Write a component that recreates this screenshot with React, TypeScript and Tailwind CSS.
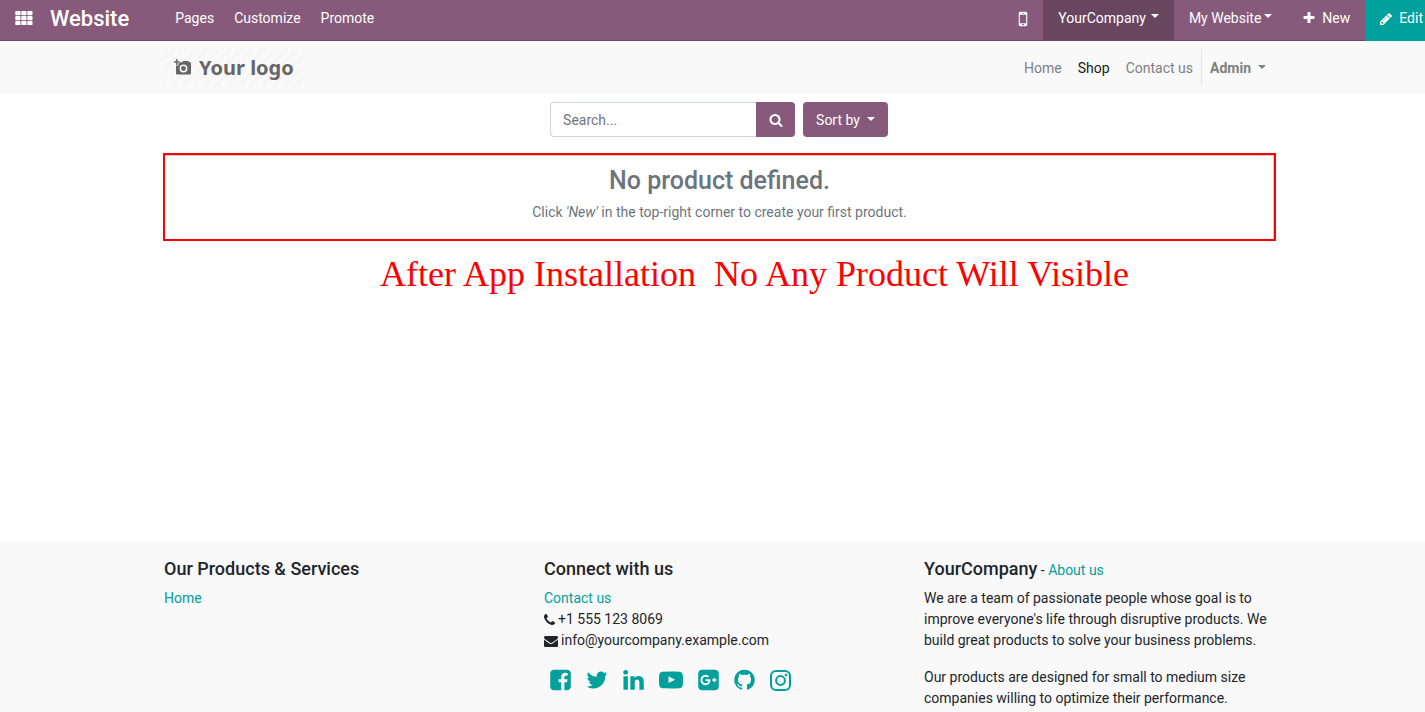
import type { ReactNode } from "react";

const icons = {
  mobile: "M976 1408q0-33-23.5-56.5t-56.5-23.5-56.5 23.5-23.5 56.5 23.5 56.5 56.5 23.5 56.5-23.5 23.5-56.5zm208-160v-704q0-13-9.5-22.5t-22.5-9.5h-512q-13 0-22.5 9.5t-9.5 22.5v704q0 13 9.5 22.5t22.5 9.5h512q13 0 22.5-9.5t9.5-22.5zm-192-848q0-16-16-16h-160q-16 0-16 16t16 16h160q16 0 16-16zm288-16v1024q0 52-38 90t-90 38h-512q-52 0-90-38t-38-90v-1024q0-52 38-90t90-38h512q52 0 90 38t38 90z",
  plus: "M1600 736v192q0 40-28 68t-68 28h-416v416q0 40-28 68t-68 28h-192q-40 0-68-28t-28-68v-416h-416q-40 0-68-28t-28-68v-192q0-40 28-68t68-28h416v-416q0-40 28-68t68-28h192q40 0 68 28t28 68v416h416q40 0 68 28t28 68z",
  pencil: "M491 1536l91-91-235-235-91 91v107h128v128h107zm523-928q0-22-22-22-10 0-17 7l-542 542q-7 7-7 17 0 22 22 22 10 0 17-7l542-542q7-7 7-17zm-54-192l416 416-832 832h-416v-416zm683 96q0 53-37 90l-166 166-416-416 166-165q36-38 90-38 53 0 91 38l235 234q37 39 37 91z",
  search: "M1216 832q0-185-131.5-316.5t-316.5-131.5-316.5 131.5-131.5 316.5 131.5 316.5 316.5 131.5 316.5-131.5 131.5-316.5zm512 832q0 52-38 90t-90 38q-54 0-90-38l-343-342q-179 124-399 124-143 0-273.5-55.5t-225-150-150-225-55.5-273.5 55.5-273.5 150-225 225-150 273.5-55.5 273.5 55.5 225 150 150 225 55.5 273.5q0 220-124 399l343 343q37 37 37 90z",
  phone: "M1600 1240q0 27-10 70.5t-21 68.5q-21 50-122 106-94 51-186 51-27 0-53-3.5t-57.5-12.5-47-14.5-55.5-20.5-49-18q-98-35-175-83-127-79-264-216t-216-264q-48-77-83-175-3-9-18-49t-20.5-55.5-14.5-47-12.5-57.5-3.5-53q0-92 51-186 56-101 106-122 25-11 68.5-21t70.5-10q14 0 21 3 18 6 53 76 11 19 30 54t35 63.5 31 53.5q3 4 17.5 25t21.5 35.5 7 28.5q0 20-28.500 50t-62 55-62 53-28.500 46q0 9 5 22.500t8.500 20.500 14 24 11.500 19q76 137 174 235t235 174q2 1 19 11.500t24 14 20.500 8.500 22.500 5q18 0 46-28.500t53-62 55-62 50-28.500q14 0 28.500 7t35.500 21.500 25 17.500q25 15 53.500 31t63.500 35 54 30q70 35 76 53 3 7 3 21z",
  envelope: "M1792 710v794q0 66-47 113t-113 47h-1472q-66 0-113-47t-47-113v-794q44 49 101 87 362 246 497 345 57 42 92.5 65.5t94.5 48 110 24.5h2q51 0 110-24.5t94.5-48 92.5-65.5q170-123 498-345 57-39 100-87zm0-294q0 79-49 151t-122 123q-376 261-468 325-10 7-42.5 31t-54 38.5-52 32.5-57.5 27-50 9h-2q-23 0-50-9t-57.5-27-52-32.5-54-38.5-42.5-31q-91-64-262-182.5t-205-142.5q-62-42-117-115.5t-55-136.5q0-78 41.5-130t118.5-52h1472q65 0 112.5 47t47.5 113z",
  facebook: "M1376 128q119 0 203.5 84.5t84.5 203.5v960q0 119-84.5 203.5t-203.5 84.5h-188v-595h199l30-232h-229v-148q0-56 23.5-84t91.5-28l122-1v-207q-63-9-178-9-136 0-217.5 80t-81.5 226v171h-200v232h200v595h-532q-119 0-203.5-84.5t-84.5-203.5v-960q0-119 84.5-203.5t203.5-84.5h960z",
  twitter: "M1684 408q-67 98-162 167 1 14 1 42 0 130-38 259.5t-115.5 248.5-184.5 210.5-258 146-323 54.5q-271 0-496-145 35 4 78 4 225 0 401-138-105-2-188-64.5t-114-159.5q33 5 61 5 43 0 85-11-112-23-185.5-111.5t-73.5-205.5v-4q68 38 146 41-66-44-105-115t-39-154q0-88 44-163 121 149 294.5 238.5t371.5 99.5q-8-38-8-74 0-134 94.5-228.5t228.5-94.5q140 0 236 102 109-21 205-78-37 115-142 178 93-10 186-50z",
  linkedin: "M477 625v991h-330v-991h330zm21-306q1 73-50.5 122t-135.5 49h-2q-82 0-132-49t-50-122q0-74 51.5-122.5t134.5-48.5 133 48.5 51 122.5zm1166 729v568h-329v-530q0-105-40.5-164.5t-126.5-59.5q-63 0-105.5 34.5t-63.5 85.5q-11 30-11 81v553h-329q2-399 2-647t-1-296l-1-48h329v144h-2q20-32 41-56t56.5-52 87-43.5 114.5-15.5q171 0 275 113.5t104 332.5z",
  youtube: "M711 1128l484-250-484-253v503zm185-862q168 0 324.5 4.5t229.5 9.5l73 4q1 0 17 1.5t23 3 23.5 4.5 28.5 8 28 13 31 19.5 29 26.5q6 6 15.5 18.5t29 58.5 26.5 101q8 64 12.5 136.5t5.5 113.5v176q1 145-18 290-7 55-25 99.5t-32 61.5l-14 17q-14 15-29 26.5t-31 19-28 12.5-28.5 8-24 4.5-23 3-16.5 1.5q-251 19-627 19-207-2-359.5-6.5t-200.5-7.5l-49-4-36-4q-36-5-54.5-10t-51-21-56.5-41q-6-6-15.5-18.5t-29-58.5-26.5-101q-8-64-12.5-136.5t-5.5-113.5v-176q-1-145 18-290 7-55 25-99.5t32-61.5l14-17q14-15 29-26.5t31-19.5 28-13 28.5-8 23.5-4.5 23-3 17-1.5q251-18 627-18z",
  googlePlus: "M1045 905q0-26-6-64h-362v132h217q-3 24-16.5 50t-37.5 53-66.5 44.5-96.5 17.5q-99 0-169-71t-70-171 70-171 169-71q92 0 153 59l104-101q-108-100-257-100-160 0-272 112.5t-112 271.5 112 271.5 272 112.5q165 0 266.5-105t101.5-270zm345 46h109v-110h-109v-110h-110v110h-110v110h110v110h110v-110zm274-535v960q0 119-84.5 203.5t-203.5 84.5h-960q-119 0-203.5-84.5t-84.5-203.5v-960q0-119 84.5-203.5t203.5-84.5h960q119 0 203.5 84.5t84.5 203.5z",
  github: "M896 128q209 0 385.5 103t279.5 279.5 103 385.5q0 251-146.5 451.5t-378.5 277.5q-27 5-40-7t-13-30q0-3 .5-76.5t.5-134.5q0-97-52-142 57-6 102.5-18t94-39 81-66.5 53-105 20.5-150.5q0-119-79-206 37-91-8-204-28-9-81 11t-92 44l-38 24q-93-26-192-26t-192 26q-16-11-42.5-27t-83.5-38.5-85-13.5q-45 113-8 204-79 87-79 206 0 85 20.5 150t52.5 105 80.5 67 94 39 102.5 18q-39 36-49 103-21 10-45 15t-57 5-65.5-21.5-55.5-62.5q-19-32-48.5-52t-49.5-24l-20-3q-21 0-29 4.5t-5 11.5 9 14 13 12l7 5q22 10 43.5 38t31.5 51l10 23q13 38 44 61.5t67 30 69.5 7 55.5-3.5l23-4q0 38 .5 88.5t.5 54.5q0 18-13 30t-40 7q-232-77-378.5-277.5t-146.5-451.5q0-209 103-385.5t279.5-279.5 385.5-103z",
};

type IconProps = { name: keyof typeof icons; className: string; viewBox?: string };

function Icon({ name, className, viewBox = "0 0 1792 1792" }: IconProps) {
  return (
    <svg viewBox={viewBox} className={className} fill="currentColor" aria-hidden="true">
      <path d={icons[name]} />
    </svg>
  );
}

function GridIcon() {
  return (
    <svg viewBox="0 0 18 14" className="h-[14px] w-[18px]" fill="currentColor" aria-hidden="true">
      {[0, 5, 10].map((y) =>
        [0, 6, 12].map((x) => <rect key={`${x}-${y}`} x={x + 0.3} y={y} width="5.2" height="4.2" rx="0.8" />),
      )}
    </svg>
  );
}

function InstagramIcon() {
  return (
    <svg viewBox="0 0 21 21" className="h-[21px] w-[21px]" fill="none" stroke="currentColor" strokeWidth="2" aria-hidden="true">
      <rect x="1" y="1" width="19" height="19" rx="5" />
      <circle cx="10.5" cy="10.5" r="4.4" />
      <circle cx="16" cy="5" r="1.3" fill="currentColor" stroke="none" />
    </svg>
  );
}

function Caret() {
  return (
    <svg viewBox="0 0 8 4" className="mb-1 h-1 w-2" fill="currentColor" aria-hidden="true">
      <path d="M0 0h8L4 4z" />
    </svg>
  );
}

function Container({ children, className = "" }: { children: ReactNode; className?: string }) {
  return <div className={`mx-auto w-full max-w-[1140px] px-[15px] ${className}`}>{children}</div>;
}

function AdminBar() {
  return (
    <header className="flex h-[41px] items-stretch justify-between bg-[#875a7b] text-white">
      <nav className="flex items-center border-b border-[#68465f] pb-1">
        <button type="button" aria-label="Applications" className="pl-[15px]">
          <GridIcon />
        </button>
        <a href="#website" className="ml-[17px] pt-[2px] text-[22px] leading-6 font-medium">Website</a>
        <div className="ml-[46px] flex gap-5">
          <a href="#pages">Pages</a>
          <a href="#customize">Customize</a>
          <a href="#promote">Promote</a>
        </div>
      </nav>
      <div className="flex flex-1 items-stretch justify-end">
        <div className="flex-1 border-b border-[#68465f]" />
        <button type="button" aria-label="Mobile preview" className="border-b border-[#68465f] px-[10px] pb-[2px]">
          <Icon name="mobile" className="h-5 w-5" />
        </button>
        <button type="button" className="flex items-center gap-[5px] border-b border-[#68465f] bg-[#68465f] px-[15px] pb-1">
          YourCompany <Caret />
        </button>
        <button type="button" className="flex items-center gap-[3px] border-b border-[#68465f] px-[15px] pb-1">
          My Website <Caret />
        </button>
        <button type="button" className="flex items-center gap-[6px] border-b border-[#68465f] px-[15px] pb-1">
          <Icon name="plus" className="h-[14px] w-[14px]" /> New
        </button>
        <button type="button" className="flex items-center gap-[6px] bg-[#00a09d] pr-[15px] pb-1 pl-[14px]">
          <Icon name="pencil" className="h-[14px] w-[14px]" /> Edit
        </button>
      </div>
    </header>
  );
}

function Logo() {
  return (
    <a
      href="#home"
      className="flex h-[37px] w-[139px] items-center gap-[7px] bg-[repeating-linear-gradient(135deg,#f9f9f9_0px,#f9f9f9_6px,#f4f4f4_6px,#f4f4f4_8px)] pl-[10px] text-[#666666]"
    >
      <svg viewBox="0 0 18 17" className="h-[17px] w-[18px]" aria-hidden="true">
        <path fill="currentColor" d="M7 3.2h1l1.200-1.200h5l1.200 1.200h.6q1 0 1 1V14.500q0 1-1 1H3q-1 0-1-1V6.500h2.500V4z" />
        <path stroke="currentColor" strokeWidth="1.400" d="M0 3h5.500M2.800 0v6" />
        <circle cx="9.500" cy="9.500" r="3.200" fill="none" stroke="#f9f9f9" strokeWidth="1.500" />
      </svg>
      <span className="font-['Noto_Sans',sans-serif] text-[20px] leading-6 font-bold">Your logo</span>
    </a>
  );
}

function SiteNav() {
  return (
    <div className="bg-[#f9f9f9]">
      <Container className="flex h-[53px] items-center justify-between">
        <Logo />
        <nav className="flex items-center text-[#7f7f7f]">
          <a href="#home" className="px-2 pt-[2px]">Home</a>
          <a href="#shop" className="px-2 pt-[2px] text-[#191919]">Shop</a>
          <a href="#contact" className="px-2 pt-[2px]">Contact us</a>
          <button type="button" className="flex h-[37px] items-center gap-[7px] border-l border-[#e6e6e6] px-2 pt-[2px] font-bold">
            Admin <Caret />
          </button>
        </nav>
      </Container>
    </div>
  );
}

function Shop() {
  return (
    <main className="h-[447px] pt-2">
      <form className="flex justify-center" onSubmit={(e) => e.preventDefault()}>
        <input
          type="search"
          aria-label="Search products"
          placeholder="Search..."
          className="h-[35px] w-[206px] rounded-l border border-r-0 border-[#ced4da] bg-white px-3 outline-none placeholder:text-[#6c757d]"
        />
        <button type="submit" aria-label="Search" className="flex h-[35px] w-[39px] items-center justify-center rounded-r bg-[#875a7b] text-white">
          <Icon name="search" className="h-[14px] w-[14px]" />
        </button>
        <button type="button" className="ml-2 flex h-[35px] items-center gap-[7px] rounded bg-[#875a7b] px-[13px] pt-[2px] text-white">
          Sort by <Caret />
        </button>
      </form>
      <Container className="mt-4">
        <section className="-mr-[2px] -ml-px h-[88px] border-2 border-[#ff0000] pt-[11px] text-center text-[#6c757d] shadow-[inset_-1px_1px_0_#cccccc]">
          <h1 className="text-[25px] leading-[29px] font-medium">No product defined.</h1>
          <p className="mt-[7px]">
            Click <em>'New'</em> in the top-right corner to create your first product.
          </p>
        </section>
      </Container>
      <p className="mt-3 pl-[71px] text-center font-['Liberation_Serif',serif] text-[36px] leading-[42px] whitespace-pre text-[#ff0000]">
        {"After App Installation  No Any Product Will Visible"}
      </p>
    </main>
  );
}

function Footer() {
  return (
    <footer className="flex-1 bg-[#f9f9f9] pt-[17px] text-[#212529]">
      <Container className="grid grid-cols-3 gap-[30px]">
        <section>
          <h2 className="mb-2 text-[18px] leading-[22px] font-medium">Our Products &amp; Services</h2>
          <a href="#home" className="text-[#00a09d]">Home</a>
        </section>
        <section>
          <h2 className="mb-2 text-[18px] leading-[22px] font-medium">Connect with us</h2>
          <ul>
            <li><a href="#contact" className="text-[#00a09d]">Contact us</a></li>
            <li className="flex items-center gap-[3px]">
              <Icon name="phone" viewBox="192 0 1408 1792" className="h-[14px] w-[11px]" /> +1 555 123 8069
            </li>
            <li className="flex items-center gap-[3px]">
              <Icon name="envelope" className="h-[14px] w-[14px]" /> info@yourcompany.example.com
            </li>
          </ul>
          <div className="mt-[17px] flex items-center gap-[15px] pl-[6px] text-[#00a09d]">
            <a href="#facebook" aria-label="Facebook"><Icon name="facebook" viewBox="128 0 1536 1792" className="h-6 w-[21px]" /></a>
            <a href="#twitter" aria-label="Twitter"><Icon name="twitter" viewBox="64 0 1664 1792" className="h-6 w-[22px]" /></a>
            <a href="#linkedin" aria-label="LinkedIn"><Icon name="linkedin" viewBox="128 0 1536 1792" className="h-6 w-[21px]" /></a>
            <a href="#youtube" aria-label="YouTube"><Icon name="youtube" className="h-6 w-6" /></a>
            <a href="#google-plus" aria-label="Google Plus"><Icon name="googlePlus" viewBox="128 0 1536 1792" className="h-6 w-[21px]" /></a>
            <a href="#github" aria-label="GitHub"><Icon name="github" viewBox="128 0 1536 1792" className="h-6 w-[21px]" /></a>
            <a href="#instagram" aria-label="Instagram"><InstagramIcon /></a>
          </div>
        </section>
        <section>
          <div className="mb-[7px] leading-[22px]">
            <h2 className="inline text-[18px] font-medium">YourCompany</h2> - <a href="#about" className="text-[#00a09d]">About us</a>
          </div>
          <p>
            We are a team of passionate people whose goal is to improve everyone's life through disruptive products. We
            build great products to solve your business problems.
          </p>
          <p className="mt-4">
            Our products are designed for small to medium size companies willing to optimize their performance.
          </p>
        </section>
      </Container>
    </footer>
  );
}

export default function App() {
  return (
    <div className="overflow-hidden bg-white font-[Roboto,sans-serif] text-[14px] leading-[21px]">
      <div className="flex min-h-screen w-[calc(100%+13px)] flex-col">
        <AdminBar />
        <SiteNav />
        <Shop />
        <Footer />
      </div>
    </div>
  );
}
